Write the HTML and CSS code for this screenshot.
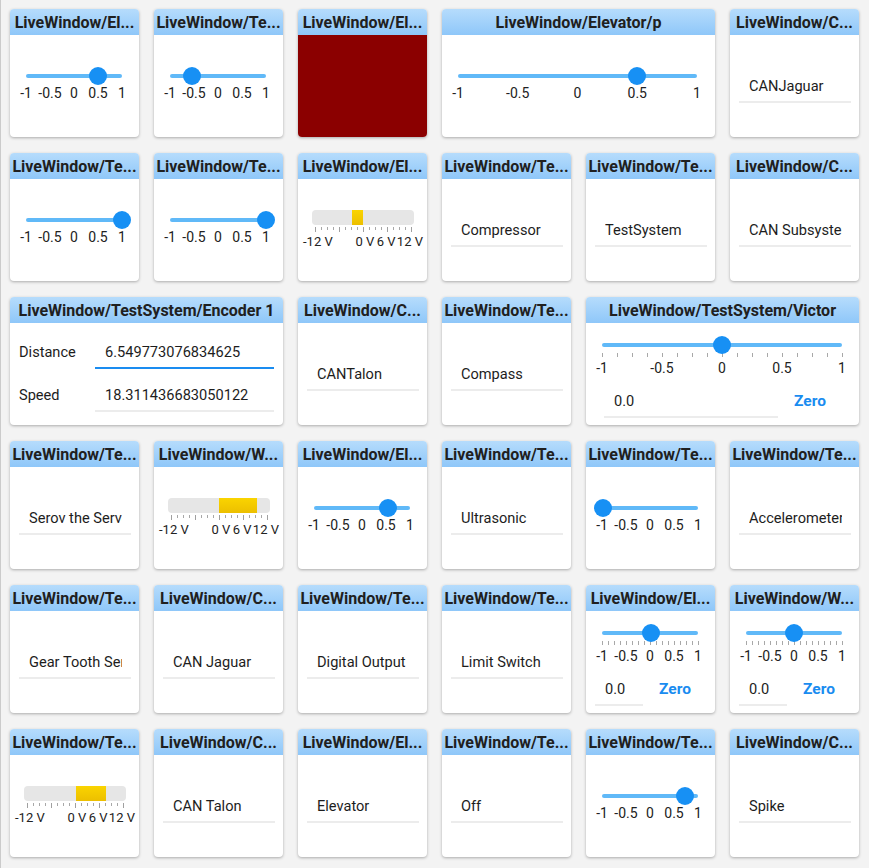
FILE: index.html
```html
<!DOCTYPE html>
<html>
<head>
<meta charset="utf-8">
<link rel="stylesheet" href="styles.css">
</head>
<body>
<div class="dash">

  <div class="tile">
    <div class="hdr">LiveWindow/El...</div>
    <div class="bd sl-bd">
      <div class="sl">
        <div class="trk"><span class="thumb" style="left:75%"></span></div>
        <div class="axis"><span>-1</span><span>-0.5</span><span>0</span><span>0.5</span><span>1</span></div>
      </div>
    </div>
  </div>

  <div class="tile">
    <div class="hdr">LiveWindow/Te...</div>
    <div class="bd sl-bd">
      <div class="sl">
        <div class="trk"><span class="thumb" style="left:23%"></span></div>
        <div class="axis"><span>-1</span><span>-0.5</span><span>0</span><span>0.5</span><span>1</span></div>
      </div>
    </div>
  </div>

  <div class="tile">
    <div class="hdr">LiveWindow/El...</div>
    <div class="bd red"></div>
  </div>

  <div class="tile w2">
    <div class="hdr">LiveWindow/Elevator/p</div>
    <div class="bd sl-bd">
      <div class="sl wide">
        <div class="trk"><span class="thumb" style="left:75%"></span></div>
        <div class="axis"><span>-1</span><span>-0.5</span><span>0</span><span>0.5</span><span>1</span></div>
      </div>
    </div>
  </div>

  <div class="tile">
    <div class="hdr">LiveWindow/C...</div>
    <div class="bd tx"><div class="field"><span>CANJaguar</span></div></div>
  </div>

  <!-- row 2 -->
  <div class="tile">
    <div class="hdr">LiveWindow/Te...</div>
    <div class="bd sl-bd">
      <div class="sl">
        <div class="trk"><span class="thumb" style="left:100%"></span></div>
        <div class="axis"><span>-1</span><span>-0.5</span><span>0</span><span>0.5</span><span>1</span></div>
      </div>
    </div>
  </div>

  <div class="tile">
    <div class="hdr">LiveWindow/Te...</div>
    <div class="bd sl-bd">
      <div class="sl">
        <div class="trk"><span class="thumb" style="left:100%"></span></div>
        <div class="axis"><span>-1</span><span>-0.5</span><span>0</span><span>0.5</span><span>1</span></div>
      </div>
    </div>
  </div>

  <div class="tile">
    <div class="hdr">LiveWindow/El...</div>
    <div class="bd vt">
      <div class="bar"><div class="bar-in"><span style="width:37px"></span><i style="width:11px"></i></div></div>
      <div class="vticks"></div>
      <div class="vaxis"><span>-12 V</span><span></span><span>0 V</span><span>6 V</span><span>12 V</span></div>
    </div>
  </div>

  <div class="tile">
    <div class="hdr">LiveWindow/Te...</div>
    <div class="bd tx"><div class="field"><span>Compressor</span></div></div>
  </div>

  <div class="tile">
    <div class="hdr">LiveWindow/Te...</div>
    <div class="bd tx"><div class="field"><span>TestSystem</span></div></div>
  </div>

  <div class="tile">
    <div class="hdr">LiveWindow/C...</div>
    <div class="bd tx"><div class="field"><span>CAN Subsystem</span></div></div>
  </div>

  <!-- row 3 -->
  <div class="tile w2">
    <div class="hdr">LiveWindow/TestSystem/Encoder 1</div>
    <div class="bd enc">
      <div class="lbl">Distance</div><div class="field focus"><span>6.549773076834625</span></div>
      <div class="lbl">Speed</div><div class="field"><span>18.311436683050122</span></div>
    </div>
  </div>

  <div class="tile">
    <div class="hdr">LiveWindow/C...</div>
    <div class="bd tx"><div class="field"><span>CANTalon</span></div></div>
  </div>

  <div class="tile">
    <div class="hdr">LiveWindow/Te...</div>
    <div class="bd tx"><div class="field"><span>Compass</span></div></div>
  </div>

  <div class="tile w2">
    <div class="hdr">LiveWindow/TestSystem/Victor</div>
    <div class="bd sc">
      <div class="sl vic">
        <div class="trk"><span class="thumb" style="left:50%"></span></div>
        <div class="ticks"></div>
        <div class="axis"><span>-1</span><span>-0.5</span><span>0</span><span>0.5</span><span>1</span></div>
      </div>
      <div class="ctl vic-ctl"><div class="field"><span>0.0</span></div><div class="zero">Zero</div></div>
    </div>
  </div>

  <!-- row 4 -->
  <div class="tile">
    <div class="hdr">LiveWindow/Te...</div>
    <div class="bd tx"><div class="field"><span>Serov the Servo</span></div></div>
  </div>

  <div class="tile">
    <div class="hdr">LiveWindow/W...</div>
    <div class="bd vt">
      <div class="bar"><div class="bar-in"><span style="width:48px"></span><i style="width:38px"></i></div></div>
      <div class="vticks"></div>
      <div class="vaxis"><span>-12 V</span><span></span><span>0 V</span><span>6 V</span><span>12 V</span></div>
    </div>
  </div>

  <div class="tile">
    <div class="hdr">LiveWindow/El...</div>
    <div class="bd sl-bd">
      <div class="sl">
        <div class="trk"><span class="thumb" style="left:77%"></span></div>
        <div class="axis"><span>-1</span><span>-0.5</span><span>0</span><span>0.5</span><span>1</span></div>
      </div>
    </div>
  </div>

  <div class="tile">
    <div class="hdr">LiveWindow/Te...</div>
    <div class="bd tx"><div class="field"><span>Ultrasonic</span></div></div>
  </div>

  <div class="tile">
    <div class="hdr">LiveWindow/Te...</div>
    <div class="bd sl-bd">
      <div class="sl">
        <div class="trk"><span class="thumb" style="left:1%"></span></div>
        <div class="axis"><span>-1</span><span>-0.5</span><span>0</span><span>0.5</span><span>1</span></div>
      </div>
    </div>
  </div>

  <div class="tile">
    <div class="hdr">LiveWindow/Te...</div>
    <div class="bd tx"><div class="field"><span>Accelerometer</span></div></div>
  </div>

  <!-- row 5 -->
  <div class="tile">
    <div class="hdr">LiveWindow/Te...</div>
    <div class="bd tx"><div class="field"><span>Gear Tooth Sensor</span></div></div>
  </div>

  <div class="tile">
    <div class="hdr">LiveWindow/C...</div>
    <div class="bd tx"><div class="field"><span>CAN Jaguar</span></div></div>
  </div>

  <div class="tile">
    <div class="hdr">LiveWindow/Te...</div>
    <div class="bd tx"><div class="field"><span>Digital Output</span></div></div>
  </div>

  <div class="tile">
    <div class="hdr">LiveWindow/Te...</div>
    <div class="bd tx"><div class="field"><span>Limit Switch</span></div></div>
  </div>

  <div class="tile">
    <div class="hdr">LiveWindow/El...</div>
    <div class="bd sc">
      <div class="sl">
        <div class="trk"><span class="thumb" style="left:51%"></span></div>
        <div class="ticks"></div>
        <div class="axis"><span>-1</span><span>-0.5</span><span>0</span><span>0.5</span><span>1</span></div>
      </div>
      <div class="ctl"><div class="field"><span>0.0</span></div><div class="zero">Zero</div></div>
    </div>
  </div>

  <div class="tile">
    <div class="hdr">LiveWindow/W...</div>
    <div class="bd sc">
      <div class="sl">
        <div class="trk"><span class="thumb" style="left:50%"></span></div>
        <div class="ticks"></div>
        <div class="axis"><span>-1</span><span>-0.5</span><span>0</span><span>0.5</span><span>1</span></div>
      </div>
      <div class="ctl"><div class="field"><span>0.0</span></div><div class="zero">Zero</div></div>
    </div>
  </div>

  <!-- row 6 -->
  <div class="tile">
    <div class="hdr">LiveWindow/Te...</div>
    <div class="bd vt">
      <div class="bar"><div class="bar-in"><span style="width:49px"></span><i style="width:30px"></i></div></div>
      <div class="vticks"></div>
      <div class="vaxis"><span>-12 V</span><span></span><span>0 V</span><span>6 V</span><span>12 V</span></div>
    </div>
  </div>

  <div class="tile">
    <div class="hdr">LiveWindow/C...</div>
    <div class="bd tx"><div class="field"><span>CAN Talon</span></div></div>
  </div>

  <div class="tile">
    <div class="hdr">LiveWindow/El...</div>
    <div class="bd tx"><div class="field"><span>Elevator</span></div></div>
  </div>

  <div class="tile">
    <div class="hdr">LiveWindow/Te...</div>
    <div class="bd tx"><div class="field"><span>Off</span></div></div>
  </div>

  <div class="tile">
    <div class="hdr">LiveWindow/Te...</div>
    <div class="bd sl-bd">
      <div class="sl">
        <div class="trk"><span class="thumb" style="left:86%"></span></div>
        <div class="axis"><span>-1</span><span>-0.5</span><span>0</span><span>0.5</span><span>1</span></div>
      </div>
    </div>
  </div>

  <div class="tile">
    <div class="hdr">LiveWindow/C...</div>
    <div class="bd tx"><div class="field"><span>Spike</span></div></div>
  </div>

</div>
</body>
</html>
```

FILE: styles.css
```css
html, body {
  margin: 0;
  padding: 0;
  background: #f3f3f3;
}
body {
  font-family: Roboto, "Liberation Sans", sans-serif;
  color: #1f1f1f;
}
.dash {
  box-sizing: border-box;
  min-height: 100vh;
  border-left: 1px solid #cbcbcb;
  padding: 9px 0 0 9px;
  display: grid;
  grid-template-columns: repeat(6, 129px);
  grid-auto-rows: 128px;
  column-gap: 15px;
  row-gap: 16px;
}
.tile {
  background: #fff;
  border-radius: 4px;
  box-shadow: 0 1px 3px rgba(0, 0, 0, 0.3);
  overflow: hidden;
  display: flex;
  flex-direction: column;
}
.tile.w2 { grid-column: span 2; }
.hdr {
  flex: none;
  height: 26px;
  line-height: 28px;
  text-align: center;
  font-weight: 700;
  font-size: 16px;
  color: #202020;
  white-space: nowrap;
  overflow: hidden;
  background: linear-gradient(#b6dcfc, #8fc7f9);
}
.bd {
  flex: 1;
  min-height: 0;
  position: relative;
}
.bd.red { background: #8b0000; }

/* slider */
.sl-bd {
  display: flex;
  flex-direction: column;
  justify-content: center;
}
.sl {
  width: 96px;
  margin-left: 16px;
  margin-bottom: 4px;
}
.sl.wide { width: 239px; }
.sl.vic { width: 240px; }
.trk {
  position: relative;
  height: 18px;
}
.trk::before {
  content: "";
  position: absolute;
  left: 0;
  right: 0;
  top: 7px;
  height: 4px;
  border-radius: 2px;
  background: #60b9f8;
}
.thumb {
  position: absolute;
  top: 0;
  width: 18px;
  height: 18px;
  margin-left: -9px;
  border-radius: 50%;
  background: #1790f4;
}
.ticks {
  margin-top: -1px;
  width: calc(100% + 1px);
  height: 4px;
  background: repeating-linear-gradient(90deg, #a8a8a8 0 1px, transparent 1px 6px);
}
.sl.vic .ticks {
  background: repeating-linear-gradient(90deg, #a8a8a8 0 1px, transparent 1px 15px);
}
.ticks + .axis { margin-top: 3px; }
.axis, .vaxis {
  display: grid;
  grid-template-columns: repeat(5, 1fr);
  width: 125%;
  margin-left: -12.5%;
  font-size: 14px;
  line-height: 16px;
  color: #222;
}
.axis span, .vaxis span {
  display: flex;
  justify-content: center;
  white-space: nowrap;
}

/* speed controller */
.sc {
  padding-top: 13px;
  display: flex;
  flex-direction: column;
}
.sc .sl { margin-bottom: 0; }
.ctl {
  display: flex;
  margin: 10px 8px 0 9px;
}
.ctl.vic-ctl { margin: 10px 17px 0 18px; }
.ctl .field { flex: 1; }
.zero {
  flex: none;
  width: 64px;
  text-align: center;
  font-weight: 700;
  font-size: 15.5px;
  line-height: 31px;
  color: #1a8cf0;
}

/* text fields */
.field {
  box-sizing: border-box;
  height: 32px;
  padding: 0 9px 0 10px;
  line-height: 31px;
  font-size: 14.6px;
  color: #1d1d1d;
  white-space: nowrap;
  border-bottom: 2px solid #ececec;
}
.field span {
  display: block;
  overflow: hidden;
}
.field.focus { border-bottom-color: #1a8cf0; }
.tx {
  display: flex;
  align-items: center;
  padding: 1px 8px 0 9px;
}
.tx .field { flex: 1; min-width: 0; }

/* encoder */
.enc {
  display: grid;
  grid-template-columns: 76px 1fr;
  row-gap: 11px;
  align-content: center;
  padding: 0 9px;
}
.enc .lbl {
  font-size: 14.6px;
  line-height: 31px;
  color: #1d1d1d;
}

/* voltage */
.vt {
  display: flex;
  flex-direction: column;
  justify-content: center;
  padding-left: 14px;
}
.bar {
  box-sizing: border-box;
  width: 102px;
  height: 15px;
  padding: 0 3px;
  border-radius: 4px;
  background: #e6e6e6;
}
.bar-in {
  display: flex;
  height: 100%;
}
.bar-in span { flex: none; }
.bar-in i {
  flex: none;
  height: 100%;
  background: linear-gradient(#fad400, #ecbf00);
}
.vticks {
  margin: 2px 0 2px 3px;
  width: 97px;
  height: 5px;
  background:
    repeating-linear-gradient(90deg, #a0a0a0 0 1px, transparent 1px 24px),
    repeating-linear-gradient(90deg, #a8a8a8 0 1px, transparent 1px 6px) 0 0 / 100% 3px no-repeat;
}
.vaxis {
  width: 120px;
  margin-left: -9px;
  font-size: 13px;
}
```
